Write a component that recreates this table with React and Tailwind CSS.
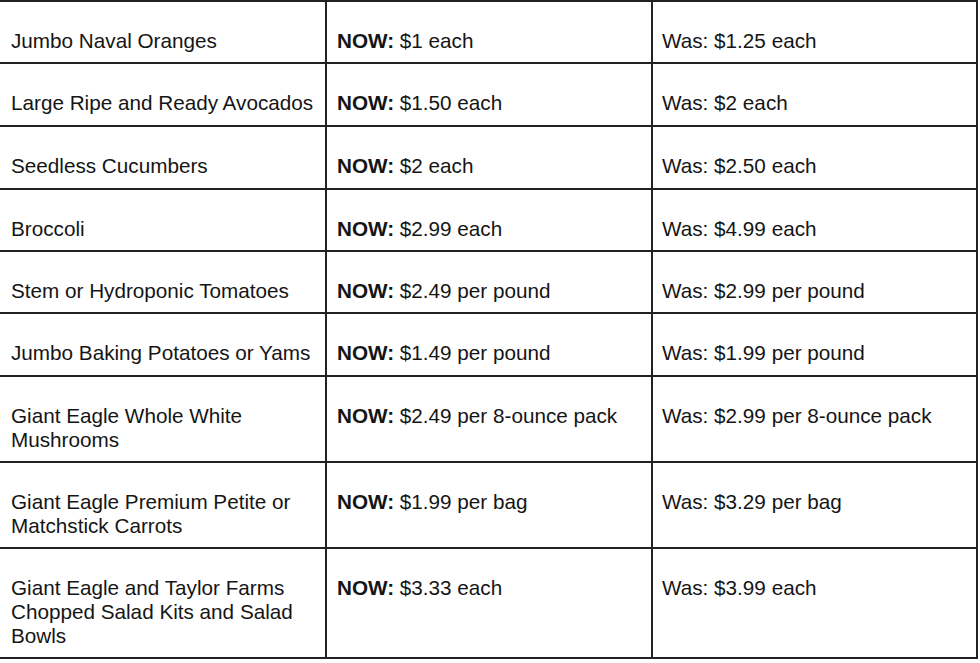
const rows = [
  { name: 'Jumbo Naval Oranges', now: '$1 each', was: '$1.25 each' },
  { name: 'Large Ripe and Ready Avocados', now: '$1.50 each', was: '$2 each' },
  { name: 'Seedless Cucumbers', now: '$2 each', was: '$2.50 each' },
  { name: 'Broccoli', now: '$2.99 each', was: '$4.99 each' },
  { name: 'Stem or Hydroponic Tomatoes', now: '$2.49 per pound', was: '$2.99 per pound' },
  { name: 'Jumbo Baking Potatoes or Yams', now: '$1.49 per pound', was: '$1.99 per pound' },
  { name: 'Giant Eagle Whole White Mushrooms', now: '$2.49 per 8-ounce pack', was: '$2.99 per 8-ounce pack' },
  { name: 'Giant Eagle Premium Petite or Matchstick Carrots', now: '$1.99 per bag', was: '$3.29 per bag' },
  { name: 'Giant Eagle and Taylor Farms Chopped Salad Kits and Salad Bowls', now: '$3.33 each', was: '$3.99 each' },
];

const cell = 'bg-white pt-[27px] pr-2 leading-[24px]';

export default function App() {
  return (
    <div className="w-[980px] h-[663px] bg-white overflow-hidden text-[#151515] text-[20.7px] font-['Liberation_Sans',Arial,sans-serif]">
      <div className="w-[978px] grid grid-cols-[325px_324px_323px] grid-rows-[60px_61px_61px_60px_60px_61px_84px_84px_108px] gap-[2px] bg-[#222] pt-[2px] pr-[2px] pb-[2px]">
        {rows.map((r) => (
          <div key={r.name} className="contents">
            <div className={`${cell} pl-[11px]`}>{r.name}</div>
            <div className={`${cell} pl-[10px]`}>
              <span className="font-bold">NOW:</span> {r.now}
            </div>
            <div className={`${cell} pl-[9px]`}>Was: {r.was}</div>
          </div>
        ))}
      </div>
    </div>
  );
}
